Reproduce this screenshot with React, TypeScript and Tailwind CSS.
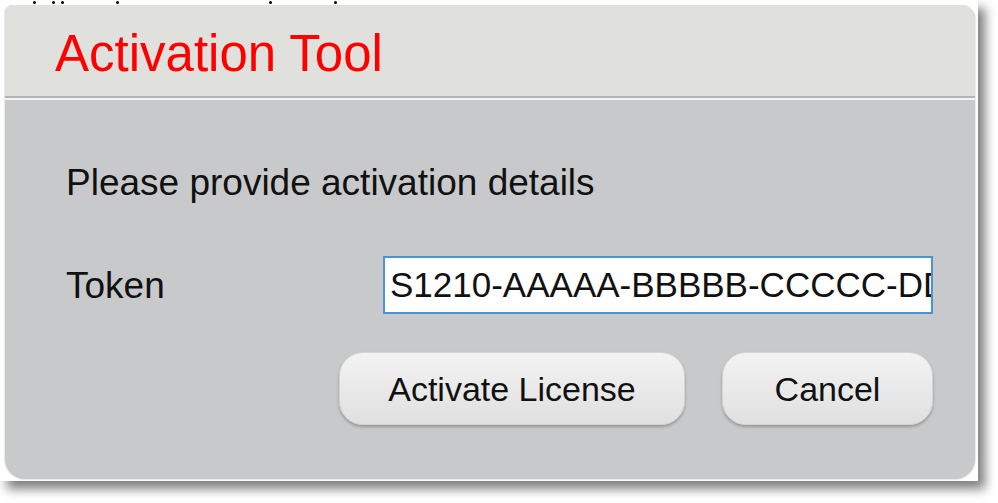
import React from 'react';

const font = { fontFamily: '"Liberation Sans", Arial, sans-serif' };

function SoftButton({ label, width }: { label: string; width: string }) {
  return (
    <button
      className={`${width} h-[73px] rounded-[24px] bg-gradient-to-b from-[#f3f3f3] to-[#e0e0e0] border border-[#d4d4d4] shadow-[0_2px_3px_rgba(0,0,0,0.25)] text-[34px] text-[#111] leading-none`}
    >
      {label}
    </button>
  );
}

export default function App() {
  return (
    <div className="w-[998px] h-[503px] bg-white" style={font}>
      <div className="w-[978px] h-[481px] bg-white shadow-[7px_8px_10px_rgba(0,0,0,0.5)] flex flex-col pl-[5px] pr-[3px] pb-[3px]">
        {/* leftovers of the page behind the captured dialog */}
        <div className="h-[5px] flex items-start">
          <span className="ml-[28px] mt-[1px] w-[3px] h-[3px] rounded-full bg-black" />
          <span className="ml-[16px] mt-[1px] w-[3px] h-[3px] rounded-full bg-black" />
          <span className="ml-[6px] mt-[1px] w-[3px] h-[3px] rounded-full bg-black" />
          <span className="ml-[52px] mt-[1px] w-[3px] h-[3px] rounded-full bg-black" />
          <span className="ml-[150px] mt-[1px] w-[3px] h-[3px] rounded-full bg-black" />
          <span className="ml-[62px] mt-[1px] w-[3px] h-[3px] rounded-full bg-black" />
        </div>

        <div className="flex-1 flex flex-col rounded-tl-[8px] rounded-tr-[14px] rounded-b-[20px] overflow-hidden bg-[#c8c9cb] shadow-[0_1px_2px_rgba(0,0,0,0.3)]">
          <div className="h-[91px] bg-[#e0e0dc] pl-[50px] pt-[23px]">
            <h1 className="text-[51px] leading-[51px] text-[#ff0000]">Activation Tool</h1>
          </div>
          <div className="h-[2px] bg-[#b4b4b4]" />
          <div className="h-[2px] bg-[#f4f4f4]" />

          <div className="flex-1 flex flex-col pl-[61px] pr-[42px] pt-[64px]">
            <p className="text-[37px] leading-[37px] text-[#111]">Please provide activation details</p>

            <div className="mt-[55px] flex items-center justify-between">
              <label htmlFor="token" className="text-[37px] leading-[37px] text-[#111]">Token</label>
              <input
                id="token"
                readOnly
                value="S1210-AAAAA-BBBBB-CCCCC-DDDDD"
                className="w-[550px] h-[58px] bg-white border-2 border-[#4a92dc] pl-[5px] text-[35px] text-[#111] outline-none"
                style={font}
              />
            </div>

            <div className="mt-[38px] flex justify-end gap-[37px]">
              <SoftButton label="Activate License" width="w-[346px]" />
              <SoftButton label="Cancel" width="w-[211px]" />
            </div>
          </div>
        </div>
      </div>
    </div>
  );
}
